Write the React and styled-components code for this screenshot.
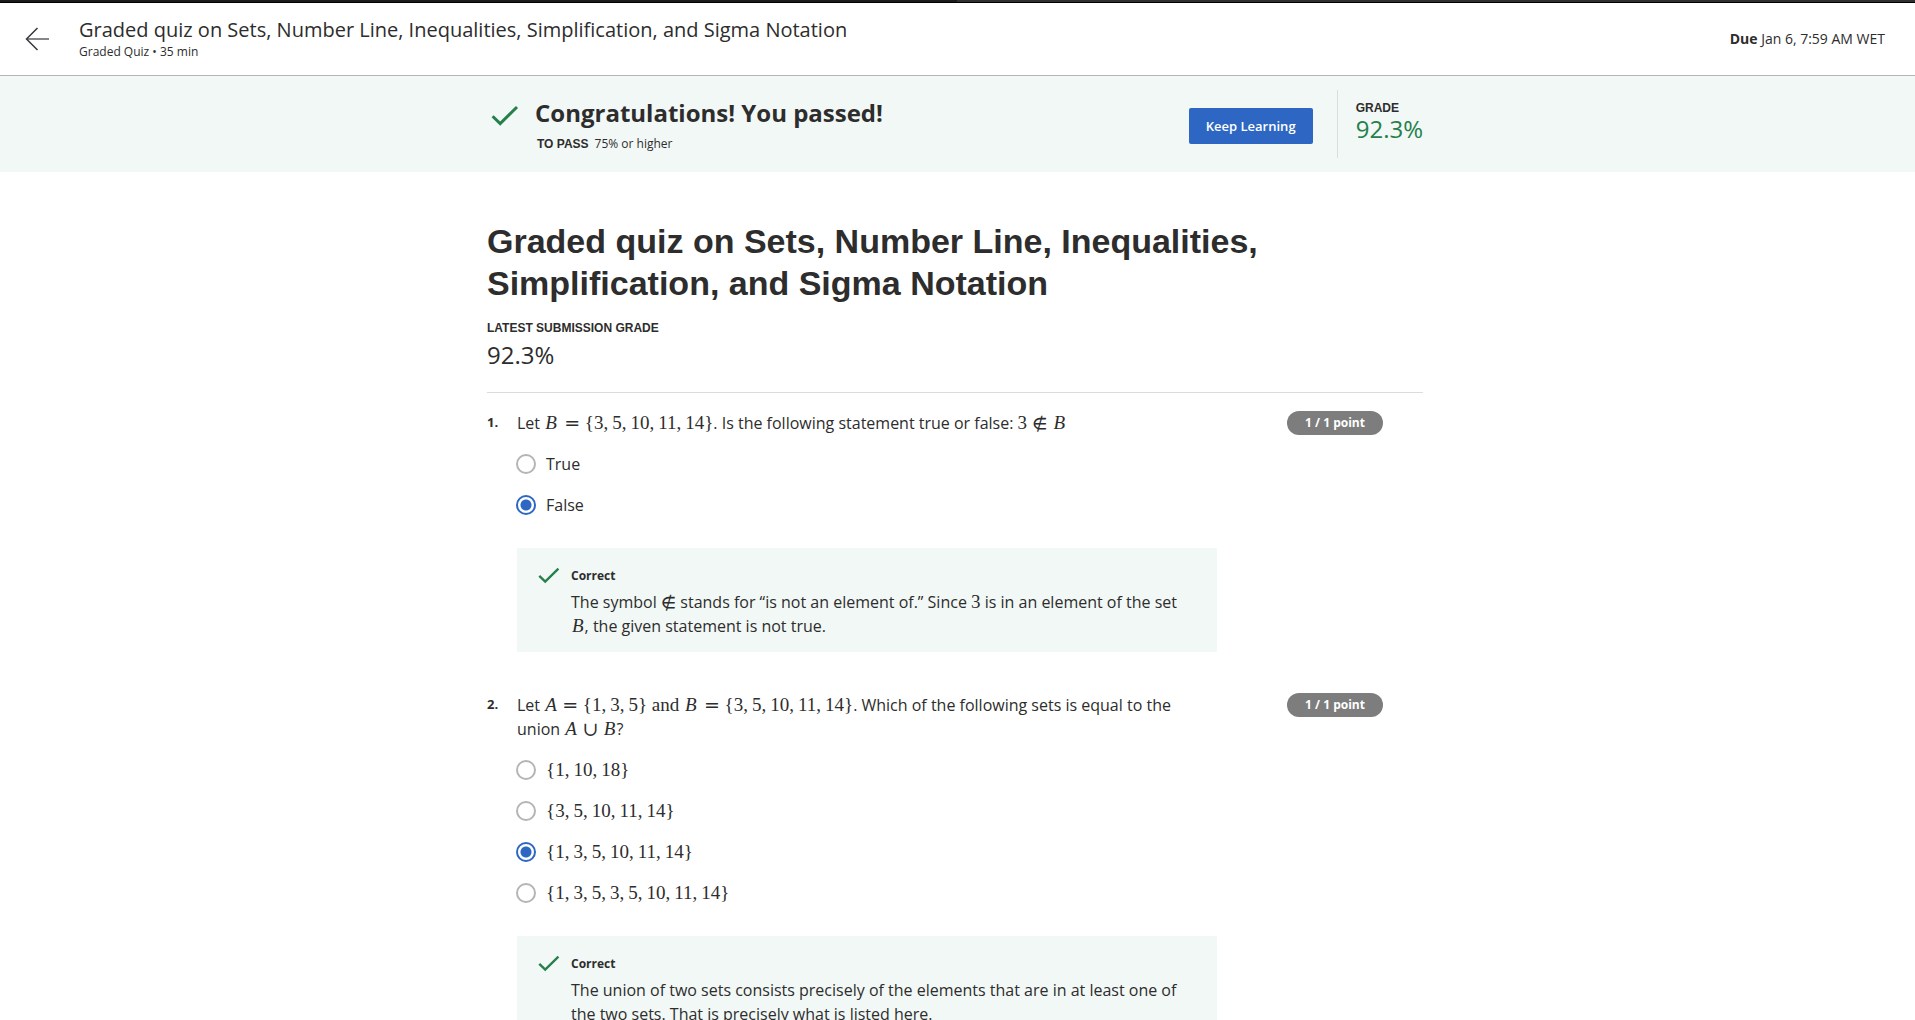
import React from "react";
import styled, { createGlobalStyle } from "styled-components";

const sans = `"Open Sans", "Noto Sans", sans-serif`;
const arial = `"Liberation Sans", Arial, sans-serif`;
const serif = `"Liberation Serif", "Times New Roman", serif`;
const ink = "#2d2d2d";
const green = "#25804c";
const blue = "#2d67c3";
const mint = "#f2f8f6";

const GlobalStyle = createGlobalStyle`
  *, *::before, *::after { box-sizing: border-box; }
  html, body { margin: 0; padding: 0; }
  html { background: #fff; scrollbar-width: none; }
  body { font-family: ${sans}; color: ${ink}; font-size: 16px; line-height: 24px; }
  h1, h2, h3, p, ol, fieldset { margin: 0; padding: 0; border: 0; }
`;

const TopStrip = styled.div`
  height: 3px;
  background: linear-gradient(90deg, #1c1a1b 50%, #303032 50%);
  border-bottom: 1px solid #000;
`;

const Header = styled.header`
  display: flex;
  align-items: center;
  justify-content: space-between;
  height: 73px;
  padding: 0 30px 0 24px;
  border-bottom: 1px solid #b5b5b5;
`;

const HeaderLeft = styled.div`
  display: flex;
  align-items: center;
  gap: 30px;
`;

const BackLink = styled.a`
  display: flex;
  color: #37373c;
`;

const HeaderText = styled.div`
  padding-bottom: 2px;
`;

const HeaderTitle = styled.h2`
  font-size: 20px;
  line-height: 28px;
  font-weight: 400;
`;

const HeaderMeta = styled.p`
  font-size: 12px;
  line-height: 16px;
`;

const Due = styled.p`
  font-size: 14px;
  line-height: 20px;
`;

const Banner = styled.section`
  background: ${mint};
  padding: 14px 5px 14px 0;
`;

const Column = styled.div`
  width: 100%;
  max-width: 936px;
  margin: 0 auto;
`;

const BannerRow = styled(Column)`
  display: flex;
  align-items: flex-start;
`;

const BannerIcon = styled.div`
  display: flex;
  width: 48px;
  padding: 15px 0 0 4px;
`;

const BannerText = styled.div`
  flex: 1;
  padding-top: 6px;
`;

const BannerTitle = styled.h2`
  font-size: 24px;
  line-height: 34px;
  font-weight: 700;
`;

const PassLine = styled.p`
  display: flex;
  gap: 6px;
  padding: 5px 0 0 2px;
  font-size: 12px;
  line-height: 18px;
`;

const Caps = styled.strong`
  display: block;
  font-family: ${arial};
  font-size: 12px;
  line-height: 18px;
  font-weight: 700;
`;

const PrimaryButton = styled.button`
  height: 36px;
  width: 124px;
  margin-top: 18px;
  border: 0;
  border-radius: 2px;
  background: ${blue};
  color: #fff;
  font-family: ${sans};
  font-size: 13px;
  line-height: 18px;
  font-weight: 600;
`;

const GradeBox = styled.div`
  height: 68px;
  margin-left: 24px;
  padding: 9px 0 0 18px;
  border-left: 1px solid #dcdcdc;
`;

const Score = styled.p`
  font-size: 24px;
  line-height: ${(p) => p.$line}px;
  color: ${(p) => (p.$green ? green : ink)};
`;

const Main = styled.main`
  padding: 48px 5px 0 0;
`;

const Title = styled.h1`
  font-family: ${arial};
  font-size: 34px;
  line-height: 42px;
  font-weight: 700;
`;

const Latest = styled.div`
  padding: 15px 0 19px;
  border-bottom: 1px solid #dcdcdc;
`;

const Questions = styled.ol`
  list-style: none;
  padding-top: 18px;
`;

const Question = styled.li`
  display: grid;
  grid-template-columns: 30px minmax(0, 700px) 1fr;
  padding-bottom: 41px;
`;

const Number = styled.span`
  font-size: 13px;
  line-height: 22px;
  font-weight: 700;
`;

const Body = styled.fieldset`
  min-width: 0;
`;

const Prompt = styled.legend`
  padding: 0;
  max-width: 660px;
`;

const Points = styled.span`
  justify-self: end;
  width: 96px;
  height: 24px;
  margin-right: 40px;
  border-radius: 12px;
  background: #7d7d7d;
  color: #fff;
  text-align: center;
  font-size: 12px;
  line-height: 24px;
  font-weight: 700;
`;

const Options = styled.div`
  display: flex;
  flex-direction: column;
  gap: 17px;
  padding-top: 17px;
`;

const Option = styled.label`
  display: flex;
  align-items: center;
  gap: 10px;
  height: 24px;
`;

const Radio = styled.input`
  appearance: none;
  width: 20px;
  height: 20px;
  margin: 0 0 0 -1px;
  border: 2px solid #b5b5b5;
  border-radius: 50%;
  background: #fff;
  &:checked {
    border-color: ${blue};
    background: radial-gradient(circle, ${blue} 5px, #fff 6px);
  }
`;

const Feedback = styled.div`
  display: grid;
  grid-template-columns: 36px 1fr;
  margin-top: 31px;
  padding: 16px 36px 14px 18px;
  background: ${mint};
`;

const FeedbackIcon = styled.div`
  display: flex;
  padding: 3px 0 0 3px;
`;

const FeedbackTitle = styled.h3`
  padding-bottom: 2px;
  font-size: 12px;
  line-height: 24px;
  font-weight: 700;
`;

const MathRow = styled.span`
  font-family: ${serif};
  font-size: 19px;
  line-height: 0;
  white-space: nowrap;
`;

const Var = styled.i`
  padding: 0 ${(p) => (p.$wide ? 3 : 1)}px 0 1px;
`;

const Sep = styled.span`
  padding-right: 4px;
`;

const Sym = styled.span`
  font-family: "DejaVu Math TeX Gyre", "DejaVu Sans", sans-serif;
  font-size: 19px;
  padding: 0 ${(p) => (p.$tight ? 0 : 5)}px;
`;

const Check = ({ size }) => (
  <svg width={size} height={size * 0.75} viewBox="0 0 28 21" fill="none" aria-hidden="true">
    <path d="M1.6 11.2 9.2 18.6 26 2" stroke={green} strokeWidth="3" />
  </svg>
);

const SetOf = ({ items }) => (
  <>
    {"{"}
    {items.map((n, i) => (
      <React.Fragment key={i}>
        {n}
        {i < items.length - 1 && <Sep>,</Sep>}
      </React.Fragment>
    ))}
    {"}"}
  </>
);

const SetMath = ({ items }) => (
  <MathRow>
    <SetOf items={items} />
  </MathRow>
);

const questions = [
  {
    prompt: (
      <>
        Let <MathRow><Var $wide>B</Var><Sym>=</Sym><SetOf items={[3, 5, 10, 11, 14]} /></MathRow>. Is the
        following statement true or false: <MathRow>3<Sym>∉</Sym><Var>B</Var></MathRow>
      </>
    ),
    options: ["True", "False"],
    answer: 1,
    feedback: (
      <>
        The symbol <MathRow><Sym $tight>∉</Sym></MathRow> stands for “is not an element of.” Since{" "}
        <MathRow>3</MathRow> is in an element of the set <MathRow><Var>B</Var></MathRow>, the given
        statement is not true.
      </>
    ),
  },
  {
    prompt: (
      <>
        Let <MathRow><Var>A</Var><Sym>=</Sym><SetOf items={[1, 3, 5]} /> and <Var $wide>B</Var><Sym>=</Sym>
        <SetOf items={[3, 5, 10, 11, 14]} /></MathRow>. Which of the following sets is equal to the
        union <MathRow><Var>A</Var><Sym>∪</Sym><Var>B</Var></MathRow>?
      </>
    ),
    options: [
      [1, 10, 18],
      [3, 5, 10, 11, 14],
      [1, 3, 5, 10, 11, 14],
      [1, 3, 5, 3, 5, 10, 11, 14],
    ],
    answer: 2,
    feedback:
      "The union of two sets consists precisely of the elements that are in at least one of the two sets. That is precisely what is listed here.",
  },
];

export default function App() {
  return (
    <>
      <GlobalStyle />
      <TopStrip />
      <Header>
        <HeaderLeft>
          <BackLink href="#" aria-label="Back">
            <svg width="25" height="26" viewBox="0 0 25 26" fill="none" stroke="currentColor">
              <path d="M3 13H25" stroke="#85858a" strokeWidth="2" />
              <path d="M13.5 2 2.5 13l11 11" strokeWidth="1.5" />
            </svg>
          </BackLink>
          <HeaderText>
            <HeaderTitle>
              Graded quiz on Sets, Number Line, Inequalities, Simplification, and Sigma Notation
            </HeaderTitle>
            <HeaderMeta>Graded Quiz • 35 min</HeaderMeta>
          </HeaderText>
        </HeaderLeft>
        <Due>
          <b>Due</b> Jan 6, 7:59 AM WET
        </Due>
      </Header>
      <Banner>
        <BannerRow>
          <BannerIcon>
            <Check size={28} />
          </BannerIcon>
          <BannerText>
            <BannerTitle>Congratulations! You passed!</BannerTitle>
            <PassLine>
              <Caps>TO PASS</Caps>
              <span>75% or higher</span>
            </PassLine>
          </BannerText>
          <PrimaryButton type="button">Keep Learning</PrimaryButton>
          <GradeBox>
            <Caps>GRADE</Caps>
            <Score $green $line={24}>92.3%</Score>
          </GradeBox>
        </BannerRow>
      </Banner>
      <Main>
        <Column>
          <Title>Graded quiz on Sets, Number Line, Inequalities, Simplification, and Sigma Notation</Title>
          <Latest>
            <Caps>LATEST SUBMISSION GRADE</Caps>
            <Score $line={36}>92.3%</Score>
          </Latest>
          <Questions>
            {questions.map((q, n) => (
              <Question key={n}>
                <Number>{n + 1}.</Number>
                <Body>
                  <Prompt>{q.prompt}</Prompt>
                  <Options>
                    {q.options.map((o, i) => (
                      <Option key={i}>
                        <Radio type="radio" name={`question-${n}`} defaultChecked={i === q.answer} />
                        {typeof o === "string" ? <span>{o}</span> : <SetMath items={o} />}
                      </Option>
                    ))}
                  </Options>
                  <Feedback>
                    <FeedbackIcon>
                      <Check size={22} />
                    </FeedbackIcon>
                    <div>
                      <FeedbackTitle>Correct</FeedbackTitle>
                      <p>{q.feedback}</p>
                    </div>
                  </Feedback>
                </Body>
                <Points>1 / 1 point</Points>
              </Question>
            ))}
          </Questions>
        </Column>
      </Main>
    </>
  );
}
